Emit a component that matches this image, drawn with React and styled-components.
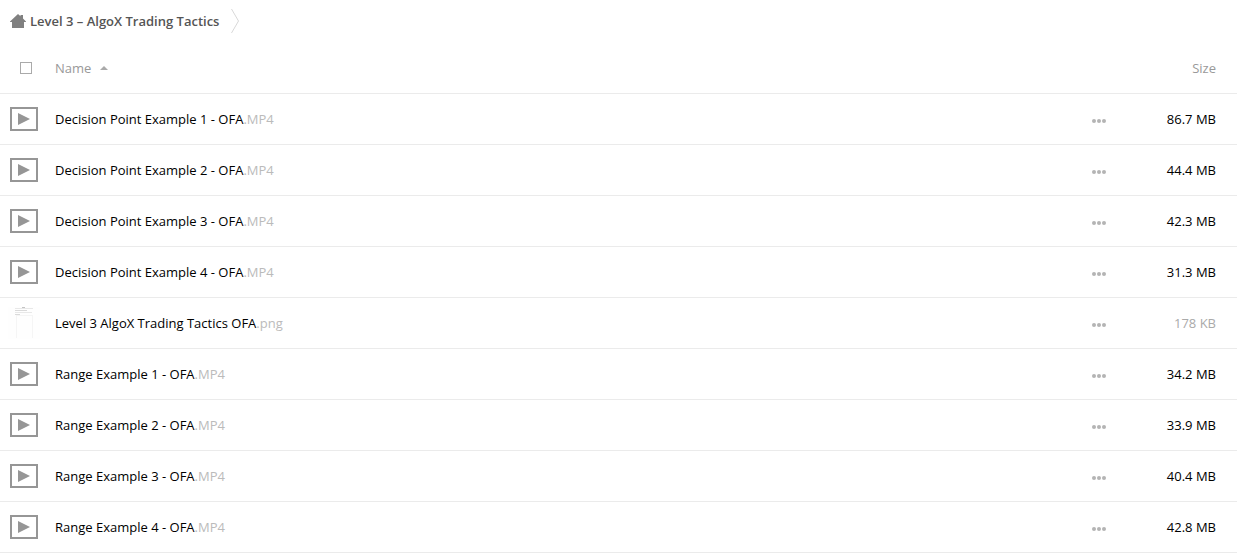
import React, { useState } from "react";
import styled, { createGlobalStyle } from "styled-components";

const files = [
  { name: "Decision Point Example 1 - OFA", ext: ".MP4", size: "86.7 MB" },
  { name: "Decision Point Example 2 - OFA", ext: ".MP4", size: "44.4 MB" },
  { name: "Decision Point Example 3 - OFA", ext: ".MP4", size: "42.3 MB" },
  { name: "Decision Point Example 4 - OFA", ext: ".MP4", size: "31.3 MB" },
  { name: "Level 3 AlgoX Trading Tactics OFA", ext: ".png", size: "178 KB", small: true },
  { name: "Range Example 1 - OFA", ext: ".MP4", size: "34.2 MB" },
  { name: "Range Example 2 - OFA", ext: ".MP4", size: "33.9 MB" },
  { name: "Range Example 3 - OFA", ext: ".MP4", size: "40.4 MB" },
  { name: "Range Example 4 - OFA", ext: ".MP4", size: "42.8 MB" },
];

const HomeIcon = () => (
  <svg width="16" height="14" viewBox="0 0 16 14" fill="#808080" aria-hidden="true">
    <path d="M8 0L10.5 2.3V1H13V4.6L16 7.5V8H14V14H2V8H0V7.5Z" />
  </svg>
);

const CrumbArrow = () => (
  <svg width="8" height="24" viewBox="0 0 8 24" fill="none" stroke="#d8d8d8" aria-hidden="true">
    <path d="M0.5 0L7.5 12L0.5 24" />
  </svg>
);

const VideoIcon = () => (
  <svg width="28" height="24" viewBox="0 0 28 24" aria-hidden="true">
    <rect x="1" y="1" width="26" height="22" fill="none" stroke="#969696" strokeWidth="2" />
    <path d="M8 6L20 12L8 18Z" fill="#969696" />
  </svg>
);

const Thumbnail = () => (
  <svg width="32" height="32" viewBox="0 0 32 32" fill="none" aria-hidden="true">
    <rect width="32" height="32" fill="#fefefe" />
    <path d="M14 0.5H17" stroke="#c4c4c4" />
    <path d="M7 1.5H25M7 5.5H24" stroke="#e8e8e8" />
    <path d="M7 3.5H19M7 7.5H12" stroke="#dadada" />
    <path d="M8.5 9V31M24.5 9V31M8 8.5H25" stroke="#f5f5f5" />
  </svg>
);

const DotsIcon = () => (
  <svg width="14" height="4" viewBox="0 0 14 4" fill="#b4b4b4" aria-hidden="true">
    <circle cx="2" cy="2" r="2" />
    <circle cx="7" cy="2" r="2" />
    <circle cx="12" cy="2" r="2" />
  </svg>
);

function FileRow({ file }) {
  return (
    <Row>
      <Cell>
        <FileIcon>{file.ext === ".png" ? <Thumbnail /> : <VideoIcon />}</FileIcon>
      </Cell>
      <NameCell>
        <FileLink href="#">
          {file.name}
          <Extension>{file.ext}</Extension>
        </FileLink>
      </NameCell>
      <ActionCell>
        <MenuButton type="button" aria-label={`Actions for ${file.name}`}>
          <DotsIcon />
        </MenuButton>
      </ActionCell>
      <SizeCell $muted={file.small}>{file.size}</SizeCell>
    </Row>
  );
}

function App() {
  const [allSelected, setAllSelected] = useState(false);

  return (
    <>
      <GlobalStyle />
      <Breadcrumb aria-label="Folder path">
        <HomeLink href="#">
          <HomeIcon />
          Level 3 – AlgoX Trading Tactics
        </HomeLink>
        <CrumbArrow />
      </Breadcrumb>
      <FileTable>
        <thead>
          <tr>
            <SelectHead>
              <Checkbox
                type="checkbox"
                aria-label="Select all"
                checked={allSelected}
                onChange={e => setAllSelected(e.target.checked)}
              />
            </SelectHead>
            <HeadCell aria-sort="ascending">
              <SortButton type="button">
                Name
                <SortArrow />
              </SortButton>
            </HeadCell>
            <ActionHead as="td" />
            <SizeHead>
              <SortButton type="button">Size</SortButton>
            </SizeHead>
          </tr>
        </thead>
        <tbody>
          {files.map(file => (
            <FileRow key={file.name} file={file} />
          ))}
        </tbody>
      </FileTable>
    </>
  );
}

export default App;

const GlobalStyle = createGlobalStyle`
  body {
    margin: 0;
    background-color: #fff;
    color: #000;
    font: 13px/20px "Open Sans", sans-serif;
  }

  svg {
    display: block;
  }
`;

const Breadcrumb = styled.nav`
  display: flex;
  align-items: center;
  gap: 12px;
  height: 42px;
  padding: 0 10px;
`;

const HomeLink = styled.a`
  display: flex;
  align-items: center;
  gap: 4px;
  color: #555;
  font-weight: 600;
  text-decoration: none;
`;

const FileTable = styled.table`
  width: 100%;
  table-layout: fixed;
  border-collapse: separate;
  border-spacing: 0;
`;

const HeadCell = styled.th`
  height: 52px;
  padding: 0;
  border-bottom: 1px solid #ebebeb;
  text-align: left;
  box-sizing: border-box;
`;

const SelectHead = styled(HeadCell)`
  width: 55px;
  padding-left: 20px;
`;

const ActionHead = styled(HeadCell)`
  width: 40px;
`;

const SizeHead = styled(HeadCell)`
  width: 118px;
  padding-right: 21px;
  text-align: right;
`;

const Checkbox = styled.input`
  appearance: none;
  display: block;
  box-sizing: border-box;
  width: 12px;
  height: 12px;
  margin: 0;
  border: 1px solid #aaa;

  &:checked {
    background-color: #aaa;
  }
`;

const SortButton = styled.button`
  display: inline-flex;
  align-items: center;
  gap: 9px;
  padding: 0;
  border: 0;
  background: none;
  color: #999;
  font: inherit;
  font-weight: 400;
  cursor: pointer;
`;

const SortArrow = styled.span`
  border: 4px solid transparent;
  border-top: 0;
  border-bottom-color: #aaa;
`;

const Row = styled.tr`
  &:hover {
    background-color: #f8f8f8;
  }
`;

const Cell = styled.td`
  height: 51px;
  padding: 0;
  border-bottom: 1px solid #ebebeb;
  box-sizing: border-box;
`;

const FileIcon = styled.div`
  display: flex;
  justify-content: center;
  width: 48px;
`;

const NameCell = styled(Cell)`
  overflow: hidden;
  text-overflow: ellipsis;
  white-space: nowrap;
`;

const FileLink = styled.a`
  color: #000;
  text-decoration: none;
`;

const Extension = styled.span`
  color: #bbb;
`;

const ActionCell = styled(Cell)`
  padding-top: 4px;
`;

const MenuButton = styled.button`
  display: flex;
  align-items: center;
  justify-content: center;
  width: 40px;
  height: 20px;
  padding: 0;
  border: 0;
  background: none;
  cursor: pointer;
`;

const SizeCell = styled(Cell)`
  padding-right: 21px;
  color: ${({ $muted }) => ($muted ? "#aaa" : "#000")};
  text-align: right;
`;
